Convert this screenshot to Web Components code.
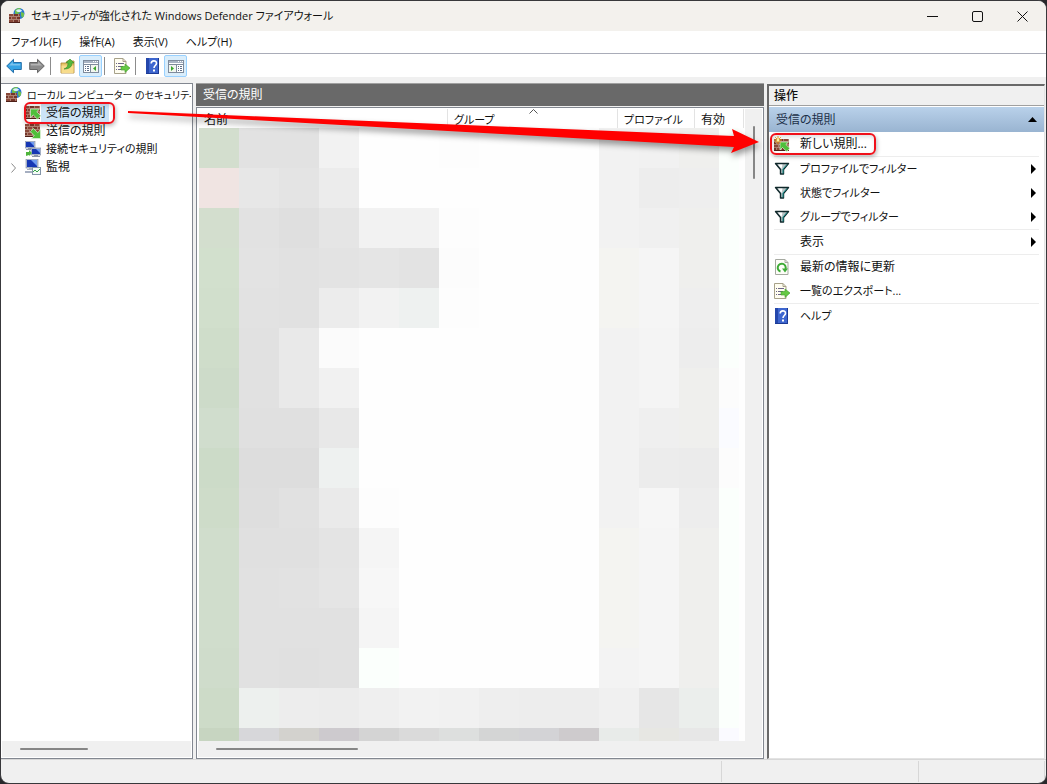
<!DOCTYPE html>
<html lang="ja">
<head>
<meta charset="utf-8">
<title>セキュリティが強化された Windows Defender ファイアウォール</title>
<style>
html,body{height:100%;margin:0}
body{background:#28282b;font:12px/18px "Open Sans","Noto Sans CJK JP",sans-serif;font-feature-settings:"palt";color:#111;--kana:11px}
</style>
</head>
<body>
<mmc-window>
  <title-bar slot="title">セキュリティが強化された Windows Defender ファイアウォール</title-bar>
  <menu-bar slot="menu"><button>ファイル(F)</button><button>操作(A)</button><button>表示(V)</button><button>ヘルプ(H)</button></menu-bar>
  <tool-bar slot="tools"></tool-bar>
  <tree-pane slot="tree">
    <tree-item icon="firewall" level="0">ローカル コンピューター のセキュリティが</tree-item>
    <tree-item icon="inbound" selected marked>受信の規則</tree-item>
    <tree-item icon="outbound">送信の規則</tree-item>
    <tree-item icon="link" kana>接続セキュリティの規則</tree-item>
    <tree-item icon="monitor" expandable>監視</tree-item>
  </tree-pane>
  <rule-list slot="list">受信の規則</rule-list>
  <action-pane slot="actions">
    <span slot="heading">受信の規則</span>
    <action-item icon="newrule" marked divider>新しい規則...</action-item>
    <action-item icon="filter" submenu kana>プロファイルでフィルター</action-item>
    <action-item icon="filter" submenu kana>状態でフィルター</action-item>
    <action-item icon="filter" submenu divider kana>グループでフィルター</action-item>
    <action-item submenu divider>表示</action-item>
    <action-item icon="refresh">最新の情報に更新</action-item>
    <action-item icon="export" divider kana>一覧のエクスポート...</action-item>
    <action-item icon="help" kana>ヘルプ</action-item>
  </action-pane>
</mmc-window>
<script>
const bricks = (x, y, w, h) => {
  let s = `<rect x="${x}" y="${y}" width="${w}" height="${h}" fill="#ad8071"/>`;
  for (let r = 0; r * 3 < h; r++)
    for (let c = 0; c * 5 < w + 2; c++) {
      const l = Math.max(x, x + c * 5 - (r % 2) * 2), e = Math.min(x + w, x + c * 5 - (r % 2) * 2 + 4);
      if (e > l) s += `<rect x="${l}" y="${y + r * 3}" width="${e - l}" height="${Math.min(2, h - r * 3)}" fill="${(r + c) % 2 ? '#74352a' : '#8a4939'}"/>`;
    }
  return s + `<path d="M${x} ${y + h - .5}h${w}" stroke="#4e1f17"/>`;
};
const pc = (x, y) => `<rect x="${x}" y="${y}" width="10" height="7" fill="#b9c3d8" stroke="#77829c" stroke-width=".6"/><rect x="${x + 1}" y="${y + 1}" width="8" height="5" fill="#1637b4"/><path d="M${x + 5} ${y + 1}h4v4z" fill="#6f9bf0"/><path d="M${x + 3} ${y + 7}h4v1h2v1h-8v-1h2z" fill="#8a93a8"/>`;
const panel = side => {
  const a = side === 'l';
  return `<rect x=".5" y="2.5" width="15" height="12" fill="#fff" stroke="#7f8b9c"/><rect x="1" y="3" width="14" height="2" fill="#a9b4c4"/><path d="M10 3.500h1m1 0h1m1 0h1" stroke="#fff"/><path d="M1 6.500h14M${a ? 7.5 : 8.5} 7v7" stroke="#7f8b9c"/><rect x="${a ? 8 : 1}" y="7" width="7" height="7" fill="#f2f6ef"/><path d="${a ? 'M2 8.500h1m1 0h2M2 10.500h1m1 0h2M2 12.500h1m1 0h2' : 'M10 8.500h1m1 0h2M10 10.500h1m1 0h2M10 12.500h1m1 0h2'}" stroke="#607089"/><path d="${a ? 'M13 8v5l-3-2.500z' : 'M3 8v5l3-2.500z'}" fill="#39a52b"/>`;
};
const arrowH = (fill, stroke, flip) => `<g ${flip ? 'transform="matrix(-1 0 0 1 16 0)"' : ''}><path d="M.7 8 7.500 1.300V4.500h7.800v7H7.500v3.200z" fill="${fill}" stroke="${stroke}" stroke-linejoin="round"/><path d="M3 7.500 6.800 4v2h7.500v1.500z" fill="#fff" opacity=".35"/></g>`;
const ICONS = {
  firewall: `<circle cx="10" cy="5.500" r="5.500" fill="#2b77cf"/><path d="M6 2.500c1-2 4-3 6-2l-2 2 1 2-3 2-2-1zM12 4l3 1v3l-2 2-1-3z" fill="#6dbf4d"/><path d="M7 2.500C9 .8 11 .8 13 2.500c-1 2-5 2-6 0z" fill="#d9f0fb"/>${bricks(0, 6, 11, 9)}`,
  inbound: bricks(0, 1, 15, 13) + `<path d="M5.500 4h9l-2.700 2.700 4 4-3.300 3.500-4.300-4.300-2.700 2.900z" fill="#4fbf3b" stroke="#e2f3dc" stroke-width=".7"/>`,
  outbound: bricks(0, 1, 15, 13) + `<path d="M15.500 15.500h-9l2.700-2.900-4-4 3.300-3.200 4.200 4.200 2.800-2.800z" fill="#4fbf3b" stroke="#e2f3dc" stroke-width=".7"/>`,
  newrule: bricks(0, 3, 15, 12) + `<path d="M6 6h8.500l-2.700 2.500 4 3.700-3 3.300-4.300-4L6 14z" fill="#4fbf3b" stroke="#e2f3dc" stroke-width=".7"/><path d="M4 0v8M0 4h8M1.200 1.200l5.600 5.600M6.800 1.200 1.200 6.800" stroke="#f0a92a"/><circle cx="4" cy="4" r="1.500" fill="#fff2a0"/>`,
  link: pc(0, 0) + pc(6, 7) + `<path d="M1 15v-4h3v-2l3 3-3 3v-1z" fill="#4fb53c"/>`,
  monitor: `<rect x="1" y="0" width="12" height="9" fill="#b9c3d8" stroke="#77829c" stroke-width=".6"/><rect x="2" y="1" width="10" height="7" fill="#1637b4"/><path d="M6 1h6v6z" fill="#6f9bf0"/><path d="M4 9h5v2H2v-1h2zM0 12h7v2H0z" fill="#a6afc1"/><rect x="7.500" y="8.500" width="8" height="7" fill="#f4faf6" stroke="#8395a8"/><path d="M8 13l2-2 2 2 3-3" stroke="#38a848" fill="none"/>`,
  back: arrowH('#35a3e4', '#246ea8'),
  forward: arrowH('#8c8c8c', '#666', true),
  folder: `<path d="M1 5h5l1-2h7v12H1z" fill="#e9c66a" stroke="#a98431" stroke-width=".8"/><path d="M1.500 7.500h12V15h-12z" fill="#f7dc8c"/><path d="M4 11C7 10 8 8 8 5H6l4-4 4 4h-2c0 4-3 6-8 6z" fill="#55b83b" stroke="#35882a" stroke-width=".6"/>`,
  paneL: panel('l'), paneR: panel('r'),
  export: `<path d="M.5.5H9l3 3v12H.5z" fill="#fffdf0" stroke="#a7a189"/><path d="M9 .5v3h3" fill="none" stroke="#a7a189"/><path d="M2 5.500h1m1 0h6M2 8.500h1m1 0h5M2 11.500h1m1 0h5" stroke="#6c6689"/><path d="M7 8.500h4V6l5 4-5 4.500V12H7z" fill="#65c944" stroke="#3f9c2c" stroke-width=".6"/>`,
  help: `<rect x="1" y="0" width="13" height="16" fill="#3e66cf"/><rect x="1" y="0" width="3" height="16" fill="#2447ab"/><path d="M13.500 0v16M1 15.500h13" stroke="#1c3a94"/><path d="M6.200 5.500c0-3.500 5.300-3.500 5.300-.3 0 2.300-2.500 2.300-2.500 4.800" stroke="#fff" stroke-width="1.600" fill="none"/><rect x="8" y="11.500" width="2" height="2" fill="#fff"/>`,
  filter: `<path d="M1.500 2.500h13L9.500 8.500V13h-3V8.500z" fill="#b8c3c5" stroke="#10282b" stroke-width="1.400" stroke-linejoin="round"/><path d="M4 3.500h4.500L7.500 8z" fill="#fff"/><path d="M13 3.500 9 8v4.500" stroke="#1f9793" fill="none"/>`,
  refresh: `<path d="M1.500.5H11l3 3v12H1.500z" fill="#fdfdf8" stroke="#a5a9a0"/><path d="M11 .5v3h3" fill="none" stroke="#a5a9a0"/><path d="M6.500 12.500A4 4 0 1 1 11.500 10" stroke="#3dab36" stroke-width="2" fill="none"/><path d="M8 9.500H14L11 13.500z" fill="#3dab36"/>`
};

function define(name, html, setup) {
  const t = document.createElement('template');
  t.innerHTML = html;
  customElements.define(name, class extends HTMLElement {
    connectedCallback() {
      if (this.shadowRoot) return;
      const root = this.attachShadow({mode: 'open'});
      root.append(t.content.cloneNode(true));
      if (setup) setup(this, root);
    }
  });
}
const BTN = 'button{font:inherit;font-feature-settings:inherit;color:inherit;background:none;border:0;padding:0;margin:0;text-align:left}:host([kana]){font-size:var(--kana)}';

define('mmc-icon', `<style>:host{display:block;width:16px;height:16px;flex:none}svg{display:block}</style><svg width="16" height="16" viewBox="0 0 16 16" aria-hidden="true"></svg>`,
  (el, r) => { r.querySelector('svg').innerHTML = ICONS[el.getAttribute('name')] || ''; });

define('mark-ring', `<style>:host{display:block;position:absolute;box-sizing:border-box;border:2px solid #f0101a;border-radius:6px;box-shadow:1px 2px 4px #0004,inset 1px 2px 4px #0002;pointer-events:none}</style>`);

define('mmc-window', `<style>
:host{display:flex;flex-direction:column;position:relative;box-sizing:border-box;min-height:100vh;border:1px solid #38383b;border-radius:9px;overflow:hidden;background:#f0f0f0}
main{flex:1;display:grid;grid-template-columns:192px minmax(0,1fr) 278px;gap:3px;padding:6px 1px 0 0}
footer{display:grid;grid-template-columns:1fr 197px 126px;height:21px;padding:1px 1px 1px 0;border-top:1px solid #d7d7d7}
footer span{border-right:1px solid #d7d7d7}
</style>
<slot name="title"></slot><slot name="menu"></slot><slot name="tools"></slot>
<main><slot name="tree"></slot><slot name="list"></slot><slot name="actions"></slot></main>
<footer><span></span><span></span><span></span></footer><pointer-arrow></pointer-arrow>`);

define('pointer-arrow', `<style>:host{display:block;position:absolute;left:127px;top:95px;pointer-events:none}svg{display:block;overflow:visible;filter:drop-shadow(1px 4px 3px #0006)}</style>
<svg width="632" height="60" aria-hidden="true"><path d="M0 15L606 40L604 33L631 46L603 57L606 51L0 17Z" fill="#f00"/></svg>`);

define('title-bar', `<style>${BTN}
:host{display:flex;align-items:center;height:30px;background:#f3f1ed;padding:0 1px 0 8px}
.t{flex:1;padding-left:6px;white-space:nowrap;font-size:var(--kana)}
button{width:45px;height:30px;display:grid;place-items:center}
svg{display:block;fill:none;stroke:#111}
</style><mmc-icon name="firewall"></mmc-icon><span class="t"><slot></slot></span>
<button aria-label="最小化"><svg width="11" height="11"><path d="M0 5.500h11"/></svg></button>
<button aria-label="最大化"><svg width="11" height="11"><rect x=".5" y=".5" width="10" height="10" rx="1.500"/></svg></button>
<button aria-label="閉じる"><svg width="11" height="11"><path d="M.5.5l10 10m0-10-10 10"/></svg></button>`);

define('menu-bar', `<style>:host{display:flex;gap:18px;height:22px;align-items:center;padding-left:10px;background:#fff;border-bottom:1px solid #a9acb8;font-size:var(--kana)}
::slotted(button){font:inherit;font-feature-settings:"palt";color:inherit;background:none;border:0;padding:0}</style><slot></slot>`);

define('tool-bar', `<style>${BTN}
:host{display:flex;align-items:center;height:23px;padding-left:1px;background:#fff}
button{box-sizing:border-box;width:23px;height:22px;display:grid;place-items:center}
button.on{background:#d9edfb;border:1px solid #99d1ff;border-radius:2px}
i{width:1px;height:18px;background:#8c8c8c;margin:0 2px}
.g{margin-left:3px}
</style>
<button aria-label="戻る"><mmc-icon name="back"></mmc-icon></button><button aria-label="進む"><mmc-icon name="forward"></mmc-icon></button><i></i>
<button class="g" aria-label="上へ"><mmc-icon name="folder"></mmc-icon></button><button class="on" aria-label="コンソール ツリー"><mmc-icon name="paneL"></mmc-icon></button><i></i>
<button class="g" aria-label="エクスポート"><mmc-icon name="export"></mmc-icon></button><i></i>
<button class="g" aria-label="ヘルプ"><mmc-icon name="help"></mmc-icon></button><button class="on" aria-label="操作ウィンドウ"><mmc-icon name="paneR"></mmc-icon></button>`);

define('scroll-bar', `<style>
:host{display:block;background:#f0f0f0;box-sizing:border-box}
:host([dir=h]){height:16px;padding:7px 0 0 18px}
:host([dir=v]){width:17px;padding:17px 0 0 8px}
div{background:#868686;border-radius:1px}
:host([dir=h]) div{height:2px;width:var(--thumb)}
:host([dir=v]) div{width:2px;height:var(--thumb)}
</style><div></div>`);

define('tree-pane', `<style>
:host{display:flex;flex-direction:column;box-sizing:border-box;min-width:0;background:#fff;border:1px solid #828790;border-left-width:0;padding:1px}
nav{flex:1;overflow:hidden;padding-top:1px}
scroll-bar{--thumb:68px}
</style><nav><slot></slot></nav><scroll-bar dir="h"></scroll-bar>`);

define('tree-item', `<style>${BTN}
:host{display:block;position:relative}
:host([level]){font-size:10px}
button{display:flex;align-items:center;height:18px;width:100%;padding-left:23px;white-space:nowrap;overflow:hidden}
:host([level]) button{padding-left:4px}
span{padding:0 3px 0 5px}
:host([selected]) span{background:#cce4f7}
.c{position:absolute;left:9px;top:5px;display:none}
:host([expandable]) .c{display:block}
mark-ring{display:none;left:22px;top:-2px;width:91px;height:22px}
:host([marked]) mark-ring{display:block}
</style><svg class="c" width="6" height="10" fill="none" stroke="#8a8a8a"><path d="M.5 .5l4 4.500-4 4.500"/></svg><button><mmc-icon></mmc-icon><span><slot></slot></span></button><mark-ring></mark-ring>`,
  (el, r) => {
    const i = document.createElement('mmc-icon');
    i.setAttribute('name', el.getAttribute('icon'));
    r.querySelector('mmc-icon').replaceWith(i);
  });

/* Redacted rows: one line per 40px band; two digits are a grey, W is the blank background. */
const W = 'fe';
const MOSAIC = [
  'd3dece e2 e2 f2 W W fd W W W f2 f1 efefed fbfffc',
  'f0e4e2 e7 e4 ec W W W W W W f2 ed ee fbfffc',
  'd3dece e2 df e5 f2 f2 fd W W W f2 f0 efefed fbfffc',
  'd2e0cd e3 e1 e3 e5 e3 fc W W W f4f4f1 f5 efefed fbfffc',
  'd1dfcc e2 e1 ec f2 eef1f0 fd W W W f4f4f1 f5 ee fbfffc',
  'cfddca e1 e9 fb W W W W W W f2 f4 ed fbfffc',
  'cddbc9 e1 e9 f1 W W W W W W f2 f4 efefed fc',
  'd0ddcd e0 e0 e8 W W W W W W f2 ef efefed fafbff',
  'ccdbc8 dd dd eef1f0 W W W W W W f2 ec eb fc',
  'cedcc9 de e1 ea fd W W W W W f2 f6 ed fbfffc',
  'd0ddcc e0 e0 e4 f5 W W W W W f4f4f1 f5 efefed fbfffc',
  'd0ddcc e1 e2 e5 f7 W W W W W f4f4f1 f5 efefed fbfffc',
  'd0ddcc e1 e1 e1 f5 W W W W W f4f4f1 f5 efefed fbfffc',
  'cfdccb e1 e0 e1 fbfffc W W W W W f3 f5 efefed fbfffc',
  'cddbc8 edf0ee ed ec ef f2 f1 ee ed ed f0 e6 ebeeec fbfffc',
  'c7d5c1 d7d7da d3d2ce cdcace d4 da dddfde d4d5d5 d3d3d6 cecbcd e8ebe9 e7e7e3 e7 fafaff'
];

define('rule-list', `<style>${BTN}
:host{display:flex;flex-direction:column;min-width:0;gap:1px;background:#f0f0f0}
h2{margin:0;box-sizing:border-box;height:23px;padding:2px 7px;font:inherit;color:#fff;background:#696969;border-top:1px solid #a0a0a0}
.box{flex:1;display:grid;grid-template:minmax(0,1fr) 16px/minmax(0,1fr) 17px;border:1px solid #828790;padding:1px;background:#fff}
.view{overflow:hidden;padding-left:1px;display:flex;flex-direction:column;position:relative}
table{table-layout:fixed;border-collapse:separate;border-spacing:0;width:545px}
th{box-sizing:border-box;height:19px;padding:3px 0 0 6px;font-weight:400;text-align:left;border-right:1px solid #e3e3e3;line-height:16px}
th:first-child{padding-left:5px}
.k{font-size:var(--kana)}
.sort{position:absolute;left:331px;top:0}
.mosaic{flex:1 1 0;min-height:0;overflow:hidden;display:grid;grid-template-columns:repeat(13,40px) 20px;grid-auto-rows:40px;align-content:start;background:#fefefe}
.h{--thumb:142px;grid-column:1/3}.v{--thumb:53px}
</style><h2><slot></slot></h2>
<div class="box"><div class="view">
<table><colgroup><col style="width:249px"><col style="width:170px"><col style="width:77px"><col style="width:49px"></colgroup><thead><tr><th>名前</th><th class="k">グループ</th><th class="k">プロファイル</th><th>有効</th></tr></thead></table>
<svg class="sort" width="9" height="5" fill="none" stroke="#555"><path d="M.5 4.500l4-4 4 4"/></svg>
<div class="mosaic"></div></div><scroll-bar class="v" dir="v"></scroll-bar><scroll-bar class="h" dir="h"></scroll-bar></div>`,
  (el, r) => {
    const m = r.querySelector('.mosaic');
    MOSAIC.forEach(row => row.split(' ').forEach(c => {
      const d = document.createElement('div'), v = c === 'W' ? W : c;
      d.style.background = '#' + (v.length === 2 ? v + v + v : v);
      m.append(d);
    }));
  });

define('action-pane', `<style>
:host{display:block;box-sizing:border-box;min-width:0;margin-top:1px;background:#fff;border:1px solid #e3e3e3;border-top:2px solid #696969;border-left:2px solid #696969}
h2,h3{margin:0;font:inherit;box-sizing:border-box}
h2{height:20px;padding:1px 5px;background:#f0f0f0;border-bottom:1px solid #a0a0a0;margin-bottom:1px;font-weight:500}
h3{display:flex;align-items:center;justify-content:space-between;height:25px;padding:0 7px;background:linear-gradient(#b9d1ea,#99b4d1);color:#1c3048}
</style><h2>操作</h2><h3><slot name="heading"></slot><svg width="9" height="5"><path d="M4.500 0L9 5H0z" fill="#000"/></svg></h3><slot></slot>`);

define('action-item', `<style>${BTN}
:host{display:block;position:relative;padding:0 5px}
:host([divider])::after{content:"";display:block;height:1px;background:#ededed}
button{display:flex;align-items:center;width:100%;height:24px}
span{flex:1;padding-left:10px}
.s{display:none;margin-right:3px}
:host([submenu]) .s{display:block}
mark-ring{display:none;left:1px;top:1px;width:106px;height:22px}
:host([marked]) mark-ring{display:block}
</style><button><mmc-icon></mmc-icon><span><slot></slot></span><svg class="s" width="5" height="10"><path d="M0 0l5 5-5 5z"/></svg></button><mark-ring></mark-ring>`,
  (el, r) => {
    const i = document.createElement('mmc-icon');
    i.setAttribute('name', el.getAttribute('icon') || '');
    r.querySelector('mmc-icon').replaceWith(i);
  });
</script>
</body>
</html>
